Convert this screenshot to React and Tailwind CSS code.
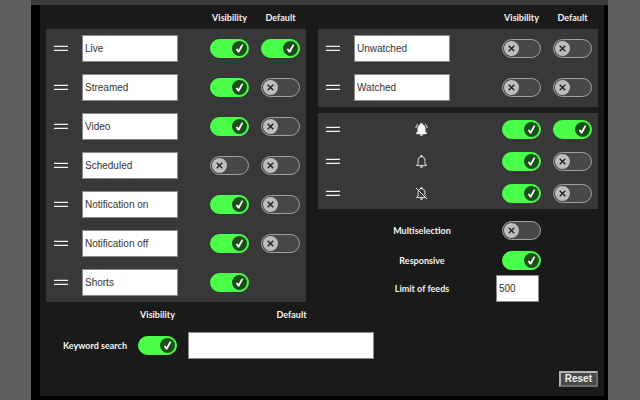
import React, { useState } from "react";

const BELL_OUTLINE =
  "M10 20h4c0 1.1-.9 2-2 2s-2-.9-2-2zm10-2.65V19H4v-1.65l2-1.88v-5.15C6 7.4 7.56 5.1 10 4.34v-.38c0-1.42 1.49-2.5 2.99-1.76.65.32 1.01 1.03 1.01 1.76v.39c2.44.75 4 3.06 4 5.98v5.15l2 1.87zm-1 .42-2-1.88v-5.47c0-2.47-1.19-4.36-3.13-5.1-1.26-.53-2.64-.5-3.84.03C8.15 6.11 7 7.99 7 10.42v5.47l-2 1.88V18h14v-.23z";
const BELL_SOLID =
  "M10 20h4c0 1.1-.9 2-2 2s-2-.9-2-2zm10-2.65V19H4v-1.65l2-1.88v-5.15C6 7.4 7.56 5.1 10 4.34v-.38c0-1.42 1.49-2.5 2.99-1.76.65.32 1.01 1.03 1.01 1.76v.39c2.44.75 4 3.06 4 5.98v5.15l2 1.87z";

function Bell({ kind }) {
  return (
    <svg viewBox="0 0 24 24" className="size-[15px]" fill="#f4f4f4" aria-hidden="true">
      {kind === "all" && (
        <>
          <path d={BELL_SOLID} stroke="#f4f4f4" strokeWidth="0.8" />
          <path d="M6.4 3.2C4.4 4.8 3.2 7 3 9.6M17.6 3.2c2 1.6 3.2 3.8 3.4 6.4" fill="none" stroke="#f4f4f4" strokeWidth="1.6" />
        </>
      )}
      {kind === "some" && <path d={BELL_OUTLINE} stroke="#f4f4f4" strokeWidth="0.3" />}
      {kind === "none" && (
        <>
          <path d={BELL_OUTLINE} stroke="#f4f4f4" strokeWidth="0.3" />
          <path d="M4.5 3 22 20.5" fill="none" stroke="#383838" strokeWidth="1.5" />
          <path d="M3 3 21 21" fill="none" stroke="#f4f4f4" strokeWidth="1.5" />
        </>
      )}
    </svg>
  );
}

function Toggle({ label, on = false }) {
  const [checked, setChecked] = useState(on);
  return (
    <label className="grid h-[19px] w-[39px] shrink-0 cursor-pointer">
      <input
        type="checkbox"
        aria-label={label}
        checked={checked}
        onChange={() => setChecked(!checked)}
        className="col-start-1 row-start-1 h-[19px] w-[39px] appearance-none rounded-full border border-[#a0a0a0] bg-[#484848] checked:border-[#4aff4a] checked:bg-[#4aff4a]"
      />
      <span
        className={
          checked
            ? "pointer-events-none col-start-1 row-start-1 mr-[2px] size-[15px] self-center justify-self-end rounded-full bg-[#1b4d1b]"
            : "pointer-events-none col-start-1 row-start-1 ml-[2px] size-[15px] self-center justify-self-start rounded-full bg-[#bebebe]"
        }
      >
        <svg viewBox="0 0 15 15" className="size-[15px]" fill="none" aria-hidden="true">
          {checked ? (
            <path d="M3.7 8.2 5.3 7.4 6.5 9 9.7 3.5 11.4 3.8 7.3 11.5 5.8 11.5Z" fill="#fff" />
          ) : (
            <path d="M4.7 4.7 10.3 10.3M10.3 4.7 4.7 10.3" stroke="#222" strokeWidth="1.4" />
          )}
        </svg>
      </span>
    </label>
  );
}

function Handle() {
  return (
    <svg viewBox="0 0 14 7" className="h-[7px] w-3.5 shrink-0" aria-hidden="true">
      <path d="M0 .7h14v1.3H0zM0 4.7h14v1.3H0z" fill="#f0f0f0" />
    </svg>
  );
}

const FIELD =
  "h-[27px] border border-[#8a8a8a] bg-white px-[2px] font-[Liberation_Sans,Arial,sans-serif] text-[10px] font-normal text-[#333] outline-none";

function Headings() {
  return (
    <div className="flex h-6 items-center justify-end gap-3 pr-1.5 pt-px">
      <span className="flex w-[39px] justify-center">Visibility</span>
      <span className="flex w-[39px] justify-center">Default</span>
    </div>
  );
}

function FilterRow({ name, visible, active }) {
  return (
    <li className="flex h-[39px] items-center gap-3.5 pl-2 pr-1.5">
      <Handle />
      <input aria-label={name + " label"} defaultValue={name} className={FIELD + " w-24"} />
      <div className="ml-auto flex gap-3">
        <Toggle label={name + " visibility"} on={visible} />
        {active === undefined ? <span className="w-[39px]" /> : <Toggle label={name + " default"} on={active} />}
      </div>
    </li>
  );
}

function BellRow({ kind, active }) {
  return (
    <li className="flex h-8 items-center gap-3.5 pl-2 pr-1.5 pt-px">
      <Handle />
      <div className="flex flex-1 justify-center">
        <Bell kind={kind} />
      </div>
      <div className="flex gap-3">
        <Toggle label={"Bell " + kind + " visibility"} on />
        <Toggle label={"Bell " + kind + " default"} on={active} />
      </div>
    </li>
  );
}

const STATUS = [
  { name: "Live", visible: true, active: true },
  { name: "Streamed", visible: true, active: false },
  { name: "Video", visible: true, active: false },
  { name: "Scheduled", visible: false, active: false },
  { name: "Notification on", visible: true, active: false },
  { name: "Notification off", visible: true, active: false },
  { name: "Shorts", visible: true },
];

export default function App() {
  return (
    <div className="flex min-h-screen flex-col bg-[#606060] pl-[31px] pr-8 font-[Lato,'Open_Sans',sans-serif] text-[9px] leading-3 font-bold text-[#f4f4f4]">
      <div className="h-[5px] bg-[#3c3c3c]" />
      <main className="flex flex-1 flex-col bg-black pb-1 pl-[9px] pr-1">
        <div className="flex flex-1 flex-col bg-[#1a1a1a] px-1.5 pb-[9px]">
          <div className="flex gap-3">
            <section className="w-[260px] shrink-0">
              <Headings />
              <ul className="bg-[#383838]">
                {STATUS.map((row) => (
                  <FilterRow key={row.name} {...row} />
                ))}
              </ul>
            </section>
            <section className="flex-1">
              <Headings />
              <ul className="mb-1.5 bg-[#383838]">
                <FilterRow name="Unwatched" visible={false} active={false} />
                <FilterRow name="Watched" visible={false} active={false} />
              </ul>
              <ul className="bg-[#383838]">
                <BellRow kind="all" active />
                <BellRow kind="some" active={false} />
                <BellRow kind="none" active={false} />
              </ul>
              <div className="pl-9 pt-1.5">
                <div className="flex h-[31px] items-center gap-3">
                  <span className="w-[136px] text-center">Multiselection</span>
                  <Toggle label="Multiselection" />
                </div>
                <div className="flex h-[29px] items-center gap-3">
                  <span className="w-[136px] text-center">Responsive</span>
                  <Toggle label="Responsive" on />
                </div>
                <div className="flex items-center gap-1.5">
                  <label htmlFor="limit" className="w-[136px] text-center">
                    Limit of feeds
                  </label>
                  <input id="limit" defaultValue="500" className={FIELD + " w-[43px]"} />
                </div>
              </div>
            </section>
          </div>
          <section className="grid grid-cols-[81px_39px_207px] items-center gap-x-[11px]">
            <span className="col-start-2 flex h-[25px] items-center justify-center">Visibility</span>
            <span className="text-center">Default</span>
            <label htmlFor="keyword" className="col-start-1 mt-[5px] whitespace-nowrap text-right">
              Keyword search
            </label>
            <div className="mt-[5px]">
              <Toggle label="Keyword search visibility" on />
            </div>
            <input id="keyword" className={FIELD + " mt-[5px] w-[186px]"} />
          </section>
          <div className="mt-3 flex justify-end">
            <button
              type="button"
              className="flex h-4 items-center border-2 border-t-[#b4b4b4] border-r-[#6a6a6a] border-b-[#6a6a6a] border-l-[#b4b4b4] bg-[#484848] px-1 font-[Liberation_Sans,Arial,sans-serif] text-[10px] font-bold"
            >
              Reset
            </button>
          </div>
        </div>
      </main>
    </div>
  );
}
